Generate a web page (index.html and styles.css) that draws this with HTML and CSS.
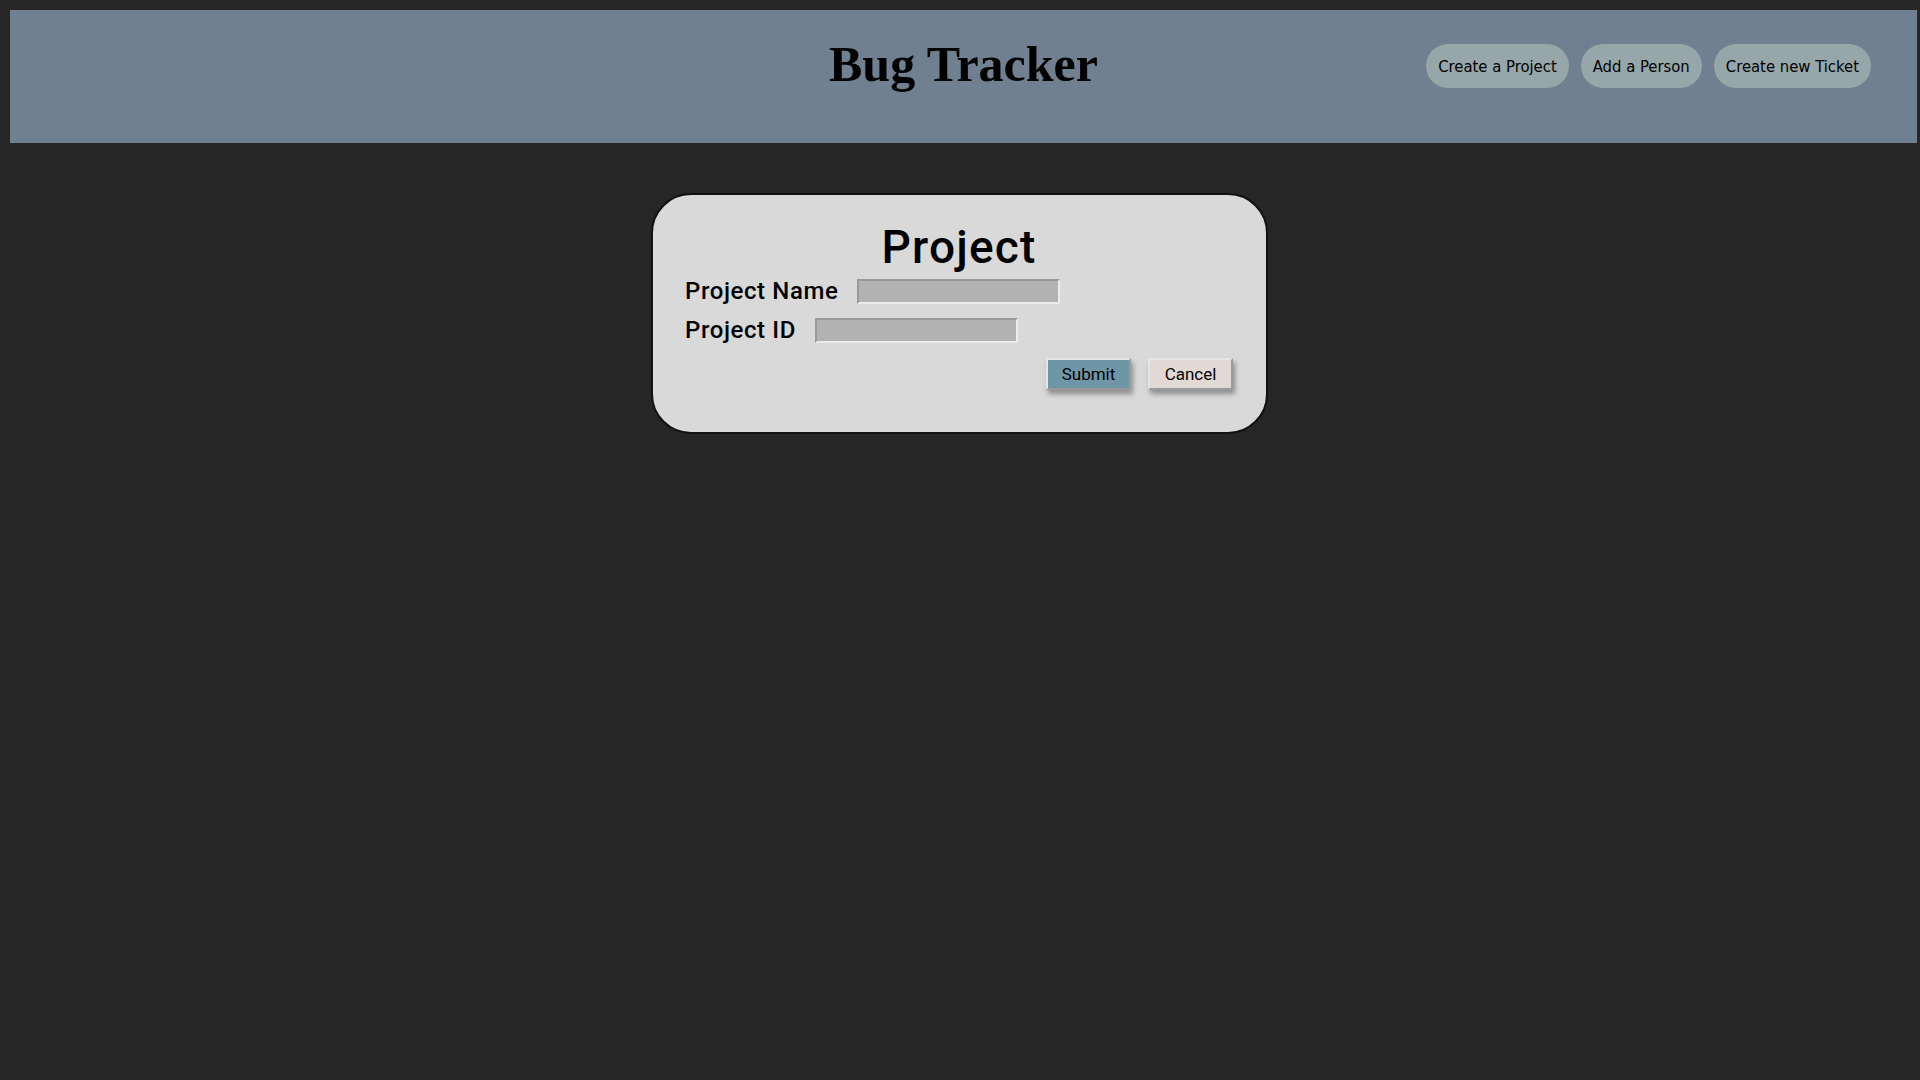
FILE: index.html
```html
<!DOCTYPE html>
<html lang="en">
<head>
<meta charset="utf-8">
<title>Bug Tracker</title>
<link rel="stylesheet" href="styles.css">
</head>
<body>
<header class="topbar">
  <div class="spacer"></div>
  <h1 class="brand">Bug Tracker</h1>
  <nav class="nav">
    <button class="nav-btn" type="button">Create a Project</button>
    <button class="nav-btn" type="button">Add a Person</button>
    <button class="nav-btn" type="button">Create new Ticket</button>
  </nav>
</header>
<main class="main">
  <form class="card">
    <h2 class="card-title">Project</h2>
    <div class="row">
      <label class="label" for="pname">Project Name</label>
      <input class="field" id="pname" type="text">
    </div>
    <div class="row">
      <label class="label" for="pid">Project ID</label>
      <input class="field" id="pid" type="text">
    </div>
    <div class="actions">
      <button class="btn btn-submit" type="button">Submit</button>
      <button class="btn btn-cancel" type="button">Cancel</button>
    </div>
  </form>
</main>
</body>
</html>
```
FILE: styles.css
```css
html, body {
  margin: 0;
  background: #262626;
}
body {
  padding: 10px 3px 0 10px;
  min-height: 1070px;
  box-sizing: border-box;
}
.topbar {
  background: #708090;
  height: 133px;
  box-sizing: border-box;
  padding-top: 26px;
  display: grid;
  grid-template-columns: 1fr auto 1fr;
  align-items: start;
}
.brand {
  margin: 0;
  font-family: "Liberation Serif", "Times New Roman", serif;
  font-weight: bold;
  font-size: 50px;
  line-height: 56px;
  color: #000;
}
.nav {
  justify-self: end;
  display: flex;
  gap: 12px;
  margin-top: 8px;
  padding-right: 46px;
}
.nav-btn {
  height: 44px;
  padding: 0 12px;
  border: none;
  border-radius: 22px;
  background: #96a6a9;
  color: #000;
  font-family: "DejaVu Sans Condensed", "DejaVu Sans", sans-serif;
  font-stretch: condensed;
  font-size: 16.5px;
}
.main {
  display: flex;
  justify-content: center;
  padding-top: 50px;
  padding-right: 8px;
}
.card {
  width: 617px;
  box-sizing: border-box;
  background: #d9d9d9;
  border: 2px solid #111;
  border-radius: 40px;
  padding: 27px 33px 42px 32px;
  font-family: Roboto, "Liberation Sans", sans-serif;
  color: #000;
}
.card-title {
  margin: 0;
  text-align: center;
  font-size: 46px;
  font-weight: 500;
  line-height: 50px;
  letter-spacing: 1.2px;
}
.row {
  display: flex;
  align-items: center;
  height: 39px;
}
.label {
  font-size: 24px;
  font-weight: 500;
  line-height: 28px;
  margin-right: 19px;
  margin-bottom: 2px;
  letter-spacing: 0.6px;
}
.field {
  width: 203px;
  height: 25px;
  box-sizing: border-box;
  margin: 0;
  padding: 0 4px;
  background: #b3b3b3;
  border: 2px solid;
  border-color: #999 #ececec #ececec #999;
}
.actions {
  display: flex;
  justify-content: flex-end;
  gap: 17px;
  margin-top: 8px;
}
.btn {
  width: 85px;
  height: 32px;
  box-sizing: border-box;
  padding: 0;
  border: 2px solid;
  border-color: #e6e6e6 #9a9a9a #9a9a9a #e6e6e6;
  font-family: Roboto, "Liberation Sans", sans-serif;
  font-size: 17px;
  color: #000;
  box-shadow: 2px 4px 5px rgba(0, 0, 0, 0.35);
}
.btn-submit {
  background: #6f96a6;
}
.btn-cancel {
  background: #e2d9d5;
}
```
